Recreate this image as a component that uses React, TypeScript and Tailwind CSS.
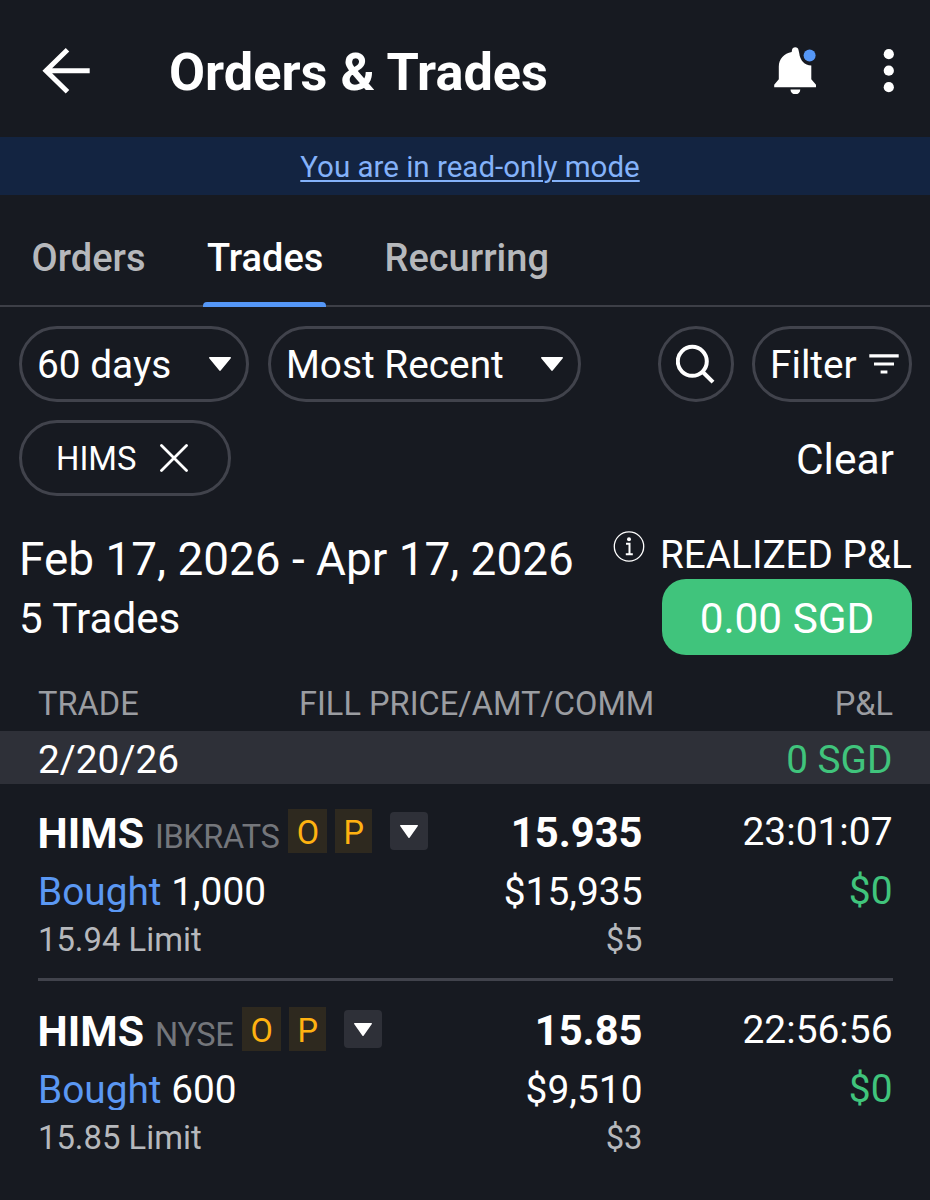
import React from "react";

type Trade = {
  symbol: string;
  exchange: string;
  quantity: string;
  order: string;
  price: string;
  amount: string;
  commission: string;
  time: string;
  pnl: string;
};

const trades: Trade[] = [
  {
    symbol: "HIMS",
    exchange: "IBKRATS",
    quantity: "1,000",
    order: "15.94 Limit",
    price: "15.935",
    amount: "$15,935",
    commission: "$5",
    time: "23:01:07",
    pnl: "$0",
  },
  {
    symbol: "HIMS",
    exchange: "NYSE",
    quantity: "600",
    order: "15.85 Limit",
    price: "15.85",
    amount: "$9,510",
    commission: "$3",
    time: "22:56:56",
    pnl: "$0",
  },
];

function Caret({ className }: { className: string }) {
  return (
    <svg viewBox="0 0 22 14" preserveAspectRatio="none" className={className} fill="#fff">
      <path d="M.8 0h20.4c.7 0 1 .7.6 1.200L11.700 13.600c-.4.5-1 .5-1.400 0L.2 1.200C-.2.700.1 0 .8 0Z" />
    </svg>
  );
}

function Header() {
  return (
    <header className="flex h-[137px] items-start pt-[36px]">
      <svg viewBox="0 0 50 50" className="mt-[10px] ml-[41px] size-[50px]" fill="none" stroke="#fff" strokeWidth="5">
        <path d="M48.700 24.700H5M26.500 3.700 5 24.700l21.500 21" />
      </svg>
      <h1 className="ml-[78px] text-[52.300px] leading-[73px] font-bold whitespace-nowrap">Orders &amp; Trades</h1>
      <svg viewBox="0 0 44 48" className="mt-[10px] mr-0 ml-auto h-[48px] w-[44px]">
        <path
          fill="#fff"
          d="M18 4a3.300 3.300 0 0 1 6.500 0l.7 3c.9 7.500 5.300 12.300 12.100 12.500v13.700l4.700 5.500v2.500H.2v-2.500l4.600-5.500V20.500c0-7.600 5.200-13 12.900-14.500Z"
        />
        <path fill="#fff" d="M16.500 43.500h9.800a4.900 4.900 0 0 1-9.800 0Z" />
        <circle cx="35.600" cy="9.500" r="6" fill="#5597f7" />
      </svg>
      <svg viewBox="0 0 12 46" className="mt-[12px] mr-[35px] ml-[65px] h-[46px] w-[12px]" fill="#fff">
        <circle cx="5.800" cy="6.200" r="5.100" />
        <circle cx="5.800" cy="22.700" r="5.100" />
        <circle cx="5.800" cy="39.200" r="5.100" />
      </svg>
    </header>
  );
}

function Tabs() {
  return (
    <nav className="flex h-[112px] border-b-[2px] border-[#3d3f47] pl-[31.500px] text-[38px] leading-[52px] font-medium text-[#b6b8bc]">
      <div className="w-[171.500px] pt-[37px]">Orders</div>
      <div className="relative -mb-[2px] w-[123px] pt-[37px] pl-[4px] text-white">
        Trades
        <span className="absolute inset-x-0 bottom-0 h-[5px] rounded-t-[4px] bg-[#5597f7]" />
      </div>
      <div className="ml-[58.500px] pt-[37px]">Recurring</div>
    </nav>
  );
}

const pill = "flex h-[76px] items-center rounded-full border-[3px] border-[#41434c]";

function Filters() {
  return (
    <section className="pt-[19px] pr-[18px] pl-[19px]">
      <div className="flex items-center text-[38.800px]">
        <button className={`${pill} w-[230px] justify-between pr-[15px] pl-[15px]`}>
          <span className="pt-[3px]">60 days</span>
          <Caret className="h-[14px] w-[22px]" />
        </button>
        <button className={`${pill} ml-[19px] w-[313px] justify-between pr-[15px] pl-[15px]`}>
          <span className="pt-[3px]">Most Recent</span>
          <Caret className="h-[14px] w-[22px]" />
        </button>
        <button className={`${pill} ml-auto w-[76px] justify-center`}>
          <svg viewBox="0 0 40 40" className="size-[40px]" fill="none" stroke="#fff" strokeWidth="4">
            <circle cx="16.300" cy="17.300" r="14.500" />
            <path d="m26.800 28 10.200 10.200" />
          </svg>
        </button>
        <button className={`${pill} ml-[18.500px] w-[160px] justify-between pr-[10px] pl-[15px]`}>
          <span className="pt-[3px]">Filter</span>
          <svg viewBox="0 0 30 20" className="h-[20px] w-[30px]" stroke="#fff" strokeWidth="3.200">
            <path d="M.3 1.800h29.400M5 10h20M11.600 18h6.800" />
          </svg>
        </button>
      </div>
      <div className="mt-[18px] flex items-center justify-between">
        <button className={`${pill} w-[212px] pl-[34px] text-[32.800px]`}>
          <span className="pt-[4px]">HIMS</span>
          <svg viewBox="0 0 28 28" className="ml-[24px] size-[28px]" stroke="#fff" strokeWidth="2.800" strokeLinecap="round">
            <path d="m1.500 1.500 25 25M26.500 1.500l-25 25" />
          </svg>
        </button>
        <button className="mt-[4px] mr-[18px] text-[42.500px] leading-[60px]">Clear</button>
      </div>
    </section>
  );
}

function Summary() {
  return (
    <section className="flex h-[174px] justify-between pr-[18px] pl-[19px]">
      <div className="pt-[32px] whitespace-nowrap">
        <div className="text-[45.900px] leading-[62px]">Feb 17, 2026 - Apr 17, 2026</div>
        <div className="text-[42.200px] leading-[58px]">5 Trades</div>
      </div>
      <div className="flex items-start">
        <svg viewBox="0 0 32 32" className="mt-[34px] mr-[17px] size-[32px]">
          <circle cx="16" cy="16.500" r="14.700" fill="none" stroke="#fff" strokeWidth="1.300" />
          <circle cx="16" cy="9.300" r="2" fill="#fff" />
          <path d="M13 13.800h3.500v10M12.800 24.200h7" fill="none" stroke="#fff" strokeWidth="2" />
        </svg>
        <div className="w-[250px] pt-[33px]">
          <div className="-ml-[2px] text-[38.700px] leading-[51px] whitespace-nowrap">REALIZED P&amp;L</div>
          <div className="-mt-px h-[76px] rounded-[24px] bg-[#40c47c] text-center text-[42.300px] leading-[79px]">0.00 SGD</div>
        </div>
      </div>
    </section>
  );
}

const columns = "grid grid-cols-[300px_305px_1fr] pl-[38px] pr-[37px]";

function TradeRow({ trade }: { trade: Trade }) {
  return (
    <article className="mr-[37px] ml-[38px] grid h-[197px] grid-cols-[400px_205px_1fr] border-b-[3px] border-[#41434c] last:border-transparent">
      <div className="pt-[20px] whitespace-nowrap">
        <div className="flex h-[59px] items-start">
          <span className="-ml-[0.5px] text-[42.800px] leading-[58px] font-bold">{trade.symbol}</span>
          <span className="ml-[11px] text-[32.500px] leading-[67px] tracking-[-0.4px] text-[#74767b]">{trade.exchange}</span>
          <span className="mt-[5px] ml-[9px] h-[44px] w-[39px] bg-[#2e291f] text-center text-[32.500px] leading-[48px] text-[#ffb211]">O</span>
          <span className="mt-[5px] ml-[8px] h-[44px] w-[37px] bg-[#2e291f] text-center text-[32.500px] leading-[48px] text-[#ffb211]">P</span>
          <button className="mt-[8px] ml-[18px] flex size-[38px] items-center justify-center rounded-[4px] bg-[#2e3038]">
            <Caret className="h-[13px] w-[18px]" />
          </button>
        </div>
        <div className="h-[49px] text-[38.800px] leading-[58px]">
          <span className="inline-block h-[49px] overflow-hidden align-top text-[#5b98f3]">Bought</span> {trade.quantity}
        </div>
        <div className="text-[32.800px] leading-[57px] text-[#b6b8bc]">{trade.order}</div>
      </div>
      <div className="pr-[0.5px] pt-[20px] text-right">
        <div className="text-[41.700px] leading-[58px] font-bold">{trade.price}</div>
        <div className="text-[38.900px] leading-[60px]">{trade.amount}</div>
        <div className="text-[32.800px] leading-[36px] text-[#b6b8bc]">{trade.commission}</div>
      </div>
      <div className="pt-[18px] pr-[0.5px] text-right text-[38.900px] leading-[59px]">
        <div>{trade.time}</div>
        <div className="text-[#40c47c]">{trade.pnl}</div>
      </div>
    </article>
  );
}

export default function App() {
  return (
    <main className="h-[1200px] w-[930px] overflow-hidden bg-[#171a21] font-['Roboto',sans-serif] text-white">
      <Header />
      <div className="h-[58px] bg-[#132441] pl-[10px] text-center text-[29.500px] leading-[61px] text-[#84b2fa]">
        <a className="underline decoration-[2px] underline-offset-[3px]">You are in read-only mode</a>
      </div>
      <Tabs />
      <Filters />
      <Summary />
      <section>
        <div className={`${columns} h-[61px] text-[32.600px] leading-[68px] text-[#9b9da1]`}>
          <div>TRADE</div>
          <div className="-ml-[39px] whitespace-nowrap">FILL PRICE/AMT/COMM</div>
          <div className="text-right">P&amp;L</div>
        </div>
        <div className="flex h-[53px] justify-between bg-[#2e3038] pr-[37.500px] pl-[38px] text-[38.800px] leading-[58px]">
          <span>2/20/26</span>
          <span className="text-[#40c47c]">0 SGD</span>
        </div>
        <div className="flex flex-col gap-px">
          {trades.map((trade) => (
            <TradeRow key={trade.time} trade={trade} />
          ))}
        </div>
      </section>
    </main>
  );
}
